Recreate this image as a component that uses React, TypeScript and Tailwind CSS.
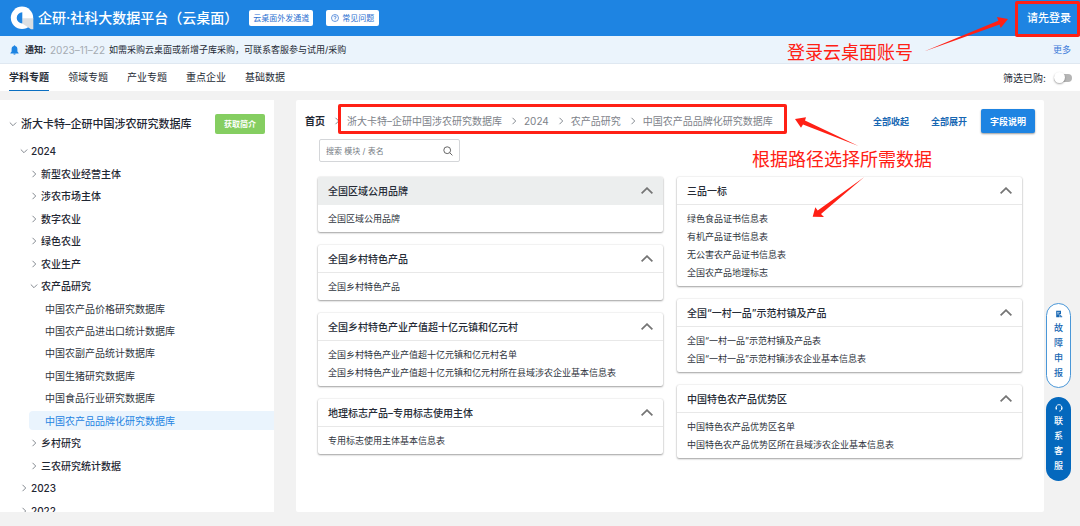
import React, { useState } from "react";

function Chevron({ open }: { open: boolean }) {
  return (
    <svg viewBox="0 0 8 8" className="h-2 w-2 shrink-0" fill="none" stroke="#858a91" strokeWidth="1">
      {open ? <path d="M0.8 2.5 4 5.7 7.2 2.5" /> : <path d="M2.5 0.8 5.7 4 2.5 7.2" />}
    </svg>
  );
}

function Logo() {
  return (
    <svg viewBox="0 0 24 24" className="h-6 w-6 shrink-0" role="img" aria-label="企研">
      <circle cx="12" cy="11.8" r="11.2" fill="#fff" />
      <path d="M12.3 12.3H23.3V23.3H21L12.3 17.6Z" fill="#dcdfe2" />
      <path d="M12.3 6.3V17.5A5.6 5.6 0 0 1 12.3 6.3Z" fill="#1e84e2" />
    </svg>
  );
}

type Item = { label: string; level: 1 | 2 | 3; open?: boolean; active?: boolean };

const tree: Item[] = [
  { label: "2024", level: 1, open: true },
  { label: "新型农业经营主体", level: 2 },
  { label: "涉农市场主体", level: 2 },
  { label: "数字农业", level: 2 },
  { label: "绿色农业", level: 2 },
  { label: "农业生产", level: 2 },
  { label: "农产品研究", level: 2, open: true },
  { label: "中国农产品价格研究数据库", level: 3 },
  { label: "中国农产品进出口统计数据库", level: 3 },
  { label: "中国农副产品统计数据库", level: 3 },
  { label: "中国生猪研究数据库", level: 3 },
  { label: "中国食品行业研究数据库", level: 3 },
  { label: "中国农产品品牌化研究数据库", level: 3, active: true },
  { label: "乡村研究", level: 2 },
  { label: "三农研究统计数据", level: 2 },
  { label: "2023", level: 1 },
  { label: "2022", level: 1 },
];

function TreeRow({ item }: { item: Item }) {
  if (item.level === 3) {
    return (
      <li className="flex items-center pl-[29px]">
        <a
          href="#"
          className={
            item.active
              ? "flex h-[19px] flex-1 items-center rounded-l-sm bg-[#eaf4fd] pl-4 text-[#1e84e2]"
              : "flex h-[19px] flex-1 items-center pl-4 text-[#303640]"
          }
        >
          {item.label}
        </a>
      </li>
    );
  }
  return (
    <li className={item.level === 1 ? "flex items-center pl-5" : "flex items-center pl-[30px]"}>
      <button className="flex items-center gap-[3px] font-medium text-[#1f2733]">
        <Chevron open={!!item.open} />
        {item.label}
      </button>
    </li>
  );
}

type CardData = { title: string; items: string[]; shaded?: boolean };

const leftCards: CardData[] = [
  { title: "全国区域公用品牌", items: ["全国区域公用品牌"], shaded: true },
  { title: "全国乡村特色产品", items: ["全国乡村特色产品"] },
  {
    title: "全国乡村特色产业产值超十亿元镇和亿元村",
    items: ["全国乡村特色产业产值超十亿元镇和亿元村名单", "全国乡村特色产业产值超十亿元镇和亿元村所在县域涉农企业基本信息表"],
  },
  { title: "地理标志产品–专用标志使用主体", items: ["专用标志使用主体基本信息表"] },
];

const rightCards: CardData[] = [
  { title: "三品一标", items: ["绿色食品证书信息表", "有机产品证书信息表", "无公害农产品证书信息表", "全国农产品地理标志"] },
  { title: "全国“一村一品”示范村镇及产品", items: ["全国“一村一品”示范村镇及产品表", "全国“一村一品”示范村镇涉农企业基本信息表"] },
  { title: "中国特色农产品优势区", items: ["中国特色农产品优势区名单", "中国特色农产品优势区所在县域涉农企业基本信息表"] },
];

function Card({ card }: { card: CardData }) {
  return (
    <section className="overflow-hidden rounded-xs bg-white shadow-[0_1px_2px_rgba(0,0,0,0.35),0_0_2px_rgba(0,0,0,0.14)]">
      <button
        className={
          card.shaded
            ? "flex h-7 w-full items-center justify-between border-b border-[#eceeee] bg-[#eceeee] px-[10px] text-[10px] font-medium text-[#252b36]"
            : "flex h-7 w-full items-center justify-between border-b border-[#e8e8e8] px-[10px] text-[10px] font-medium text-[#252b36]"
        }
      >
        {card.title}
        <svg viewBox="0 0 12 8" className="h-2 w-3" fill="none" stroke="#757575" strokeWidth="1.8">
          <path d="M0.6 6.4 6 1.2 11.4 6.4" />
        </svg>
      </button>
      <ul className="px-[10px] pt-[5px] pb-1 text-[9px] leading-[18px] text-[#303640]">
        {card.items.map((t) => (
          <li key={t}>
            <a href="#">{t}</a>
          </li>
        ))}
      </ul>
    </section>
  );
}

const tabs = ["学科专题", "领域专题", "产业专题", "重点企业", "基础数据"];
const crumbs = ["浙大卡特–企研中国涉农研究数据库", "2024", "农产品研究", "中国农产品品牌化研究数据库"];

export default function App() {
  const [onlyBought, setOnlyBought] = useState(false);
  return (
    <div className="relative flex h-screen flex-col overflow-hidden bg-[#f2f2f2] font-['Inter','Noto_Sans_CJK_SC',sans-serif] text-[10px] leading-none text-[#252b36]">
      <header className="flex h-9 shrink-0 items-center bg-[#1e84e2] pr-[9px] pl-[10px]">
        <Logo />
        <h1 className="ml-1 text-[14px] font-medium whitespace-nowrap text-white">企研·社科大数据平台（云桌面）</h1>
        <button className="ml-[11px] h-4 rounded-xs bg-white px-1 text-[8px] text-[#2c6fd0]">云桌面外发通道</button>
        <button className="ml-[13px] flex h-4 items-center gap-[3px] rounded-xs bg-white px-[5px] text-[8px] text-[#2c6fd0]">
          <svg viewBox="0 0 8 8" className="h-2 w-2" fill="none" stroke="#2c6fd0" strokeWidth="0.7">
            <circle cx="4" cy="4" r="3.5" />
            <path d="M2.9 3.2A1.1 1.1 0 1 1 4 4.3V5M4 5.5V6.2" />
          </svg>
          常见问题
        </button>
        <a href="#" className="ml-auto text-[11px] font-medium text-white">请先登录</a>
      </header>

      <div className="flex h-7 shrink-0 items-center border-b border-[#dfe8f1] bg-[#ebf4fc] pr-[9px] pl-[10px] text-[9px]">
        <svg viewBox="0 0 9 10" className="mr-[6px] h-[10px] w-[9px]" fill="#1e84e2">
          <path d="M4.5 0.2C5 .2 5.2.5 5.2 1 6.7 1.4 7.4 2.5 7.4 4V6.4L8.6 8V8.4H.4V8L1.6 6.4V4C1.6 2.5 2.3 1.4 3.8 1 3.8.5 4 .2 4.5.2ZM3.4 8.8H5.6C5.5 10 3.5 10 3.4 8.8Z" />
        </svg>
        <strong className="font-bold">通知:</strong>
        <time className="ml-1 text-[10px] text-[#a5abb2]">2023–11–22</time>
        <span className="ml-1">如需采购云桌面或新增子库采购，可联系客服参与试用/采购</span>
        <a href="#" className="ml-auto text-[#3d7bd9]">更多</a>
      </div>

      <nav className="flex h-[27px] shrink-0 items-center gap-[19px] bg-white pr-2 pl-[9px]">
        {tabs.map((t, i) => (
          <a
            key={t}
            href="#"
            className={
              i === 0
                ? "flex h-full items-center border-b border-[#0a6fc2] font-bold"
                : "flex h-full items-center border-b border-transparent"
            }
          >
            {t}
          </a>
        ))}
        <label className="ml-auto flex items-center gap-2">
          筛选已购:
          <input type="checkbox" className="peer sr-only" checked={onlyBought} onChange={(e) => setOnlyBought(e.target.checked)} />
          <span className="flex h-2 w-[18px] items-center rounded-full bg-[#b5b5b5] peer-checked:justify-end">
            <span className="h-[11px] w-[11px] rounded-full bg-white shadow-[0_1px_2px_rgba(0,0,0,0.35)]" />
          </span>
        </label>
      </nav>

      <main className="flex min-h-0 flex-1 gap-[22px] pt-[9px] pr-9 pb-[14px]">
        <aside className="w-[274px] shrink-0 overflow-hidden bg-white pt-[14px]">
          <div className="flex h-5 items-center pr-[9px] pl-[9px]">
            <button className="flex items-center gap-1 text-[11px] font-medium whitespace-nowrap text-[#1f2733]">
              <Chevron open />
              浙大卡特–企研中国涉农研究数据库
            </button>
            <button className="ml-auto h-5 w-[50px] rounded-xs bg-[#85ce61] text-[8px] font-bold text-white">获取简介</button>
          </div>
          <ul className="mt-[6px] grid h-[382px] auto-rows-fr">
            {tree.map((item) => (
              <TreeRow key={item.label} item={item} />
            ))}
          </ul>
        </aside>

        <div className="min-w-0 flex-1 rounded-xs bg-white pt-[9px]">
          <div className="flex h-6 items-center pr-[9px] pl-[9px]">
            <ol className="flex items-center gap-2 whitespace-nowrap text-[#7d8289]">
              <li className="font-bold text-[#1f2733]">
                <a href="#">首页</a>
              </li>
              {crumbs.map((c) => (
                <li key={c} className="flex items-center gap-[6px]">
                  <Chevron open={false} />
                  <a href="#">{c}</a>
                </li>
              ))}
            </ol>
            <div className="ml-auto flex items-center gap-[22px] text-[9px] font-bold text-[#1767b3]">
              <button>全部收起</button>
              <button>全部展开</button>
              <button className="-ml-2 h-6 w-[54px] rounded-xs bg-[#1e84e2] text-white shadow-[0_1px_2px_rgba(0,0,0,0.4)]">字段说明</button>
            </div>
          </div>

          <div className="mt-[6px] ml-[23px] flex h-[23px] w-[141px] items-center rounded-xs border border-[#d4d6d9] px-[6px]">
            <input
              aria-label="搜索"
              placeholder="搜索 模块 / 表名"
              className="min-w-0 flex-1 text-[8px] outline-none placeholder:text-[#767b83]"
            />
            <button aria-label="查询">
              <svg viewBox="0 0 10 10" className="h-[10px] w-[10px]" fill="none" stroke="#666" strokeWidth="1">
                <circle cx="4.2" cy="4.2" r="3.4" />
                <path d="M6.7 6.7 9.4 9.4" />
              </svg>
            </button>
          </div>

          <div className="mt-[15px] grid grid-cols-2 items-start gap-[14px] px-[22px]">
            <div className="flex flex-col gap-[13px]">
              {leftCards.map((c) => (
                <Card key={c.title} card={c} />
              ))}
            </div>
            <div className="flex flex-col gap-[13px]">
              {rightCards.map((c) => (
                <Card key={c.title} card={c} />
              ))}
            </div>
          </div>
        </div>
      </main>

      <div className="absolute top-[303px] right-[9px] flex w-[25px] flex-col gap-[9px] text-[9px] leading-[15px] font-medium">
        <button className="flex h-[85px] flex-col items-center rounded-full border border-[#4a97d8] bg-white px-[7px] pt-[6px] text-[#1767b3]">
          <svg viewBox="0 0 8 8" className="mb-[2px] h-2 w-2 shrink-0" fill="#1767b3">
            <path d="M1.2 0.8H6V4.2H4.6V7.2H1.2ZM5.2 5H6.2V6.2H7.2V7.2H5.2Z" />
            <path d="M2 2.4H4.8M2 3.9H4" stroke="#fff" strokeWidth="0.6" />
          </svg>
          故障申报
        </button>
        <button className="flex h-[84px] flex-col items-center rounded-full bg-[#0468bd] px-2 pt-[7px] text-white">
          <svg viewBox="0 0 8 8" className="mb-px h-2 w-2 shrink-0" fill="none" stroke="#fff" strokeWidth="0.9">
            <path d="M1.3 4.6A2.9 2.9 0 1 1 6.7 4.6C6.5 6.200 5.800 7 4.200 7.100" />
            <path d="M1.300 3.600V5.500M6.700 3.600V5.500" strokeWidth="1.400" />
          </svg>
          联系客服
        </button>
      </div>

      <div className="pointer-events-none absolute top-[1px] right-0 h-9 w-[65px] rounded-xs border-3 border-[#ff2015]" />
      <div className="pointer-events-none absolute top-[104px] left-[338px] h-[30px] w-[449px] rounded-xs border-3 border-[#ff2015]" />
      <p className="pointer-events-none absolute top-[44px] left-[787px] text-[18px] whitespace-nowrap text-[#ff2015]">登录云桌面账号</p>
      <p className="pointer-events-none absolute top-[151px] left-[752px] text-[18px] whitespace-nowrap text-[#ff2015]">根据路径选择所需数据</p>
      <svg viewBox="0 0 220 210" className="pointer-events-none absolute top-[10px] left-[790px] h-[210px] w-[220px]" fill="#ff2015">
        <path d="M134 41.5 208.3 10.7 207 7 218 9 210.7 18 209.5 14.5Z" />
        <path d="M68.5 136 15 110.5 16 107.3 5 109 11 117.7 13 114.5Z" />
        <path d="M74 167.3 31 204 34 207 22.7 206.7 25.3 197.3 27.7 200.5Z" />
      </svg>
    </div>
  );
}
